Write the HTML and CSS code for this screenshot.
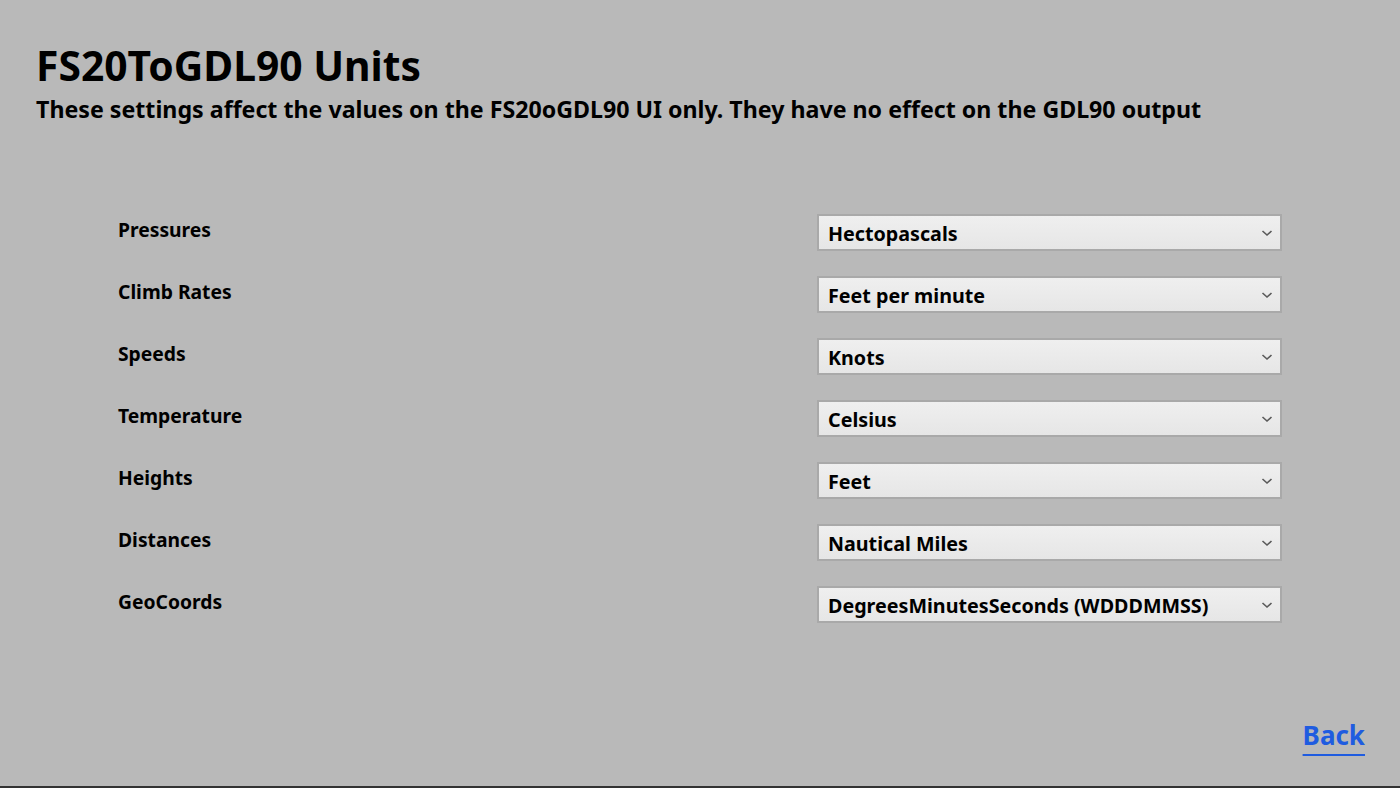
FILE: index.html
```html
<!DOCTYPE html>
<html>
<head>
<meta charset="utf-8">
<link rel="stylesheet" href="styles.css">
</head>
<body>
<div class="page">
  <header class="head">
    <h1 class="title">FS20ToGDL90 Units</h1>
    <p class="subtitle">These settings affect the values on the FS20oGDL90 UI only. They have no effect on the GDL90 output</p>
  </header>
  <main class="rows">
    <div class="row"><span class="label">Pressures</span><div class="select"><span>Hectopascals</span><svg class="chev" viewBox="0 0 12 8" width="12" height="8"><path d="M1.5 2 L6 6 L10.5 2" fill="none" stroke="#5a5a5a" stroke-width="1.6"/></svg></div></div>
    <div class="row"><span class="label">Climb Rates</span><div class="select"><span>Feet per minute</span><svg class="chev" viewBox="0 0 12 8" width="12" height="8"><path d="M1.5 2 L6 6 L10.5 2" fill="none" stroke="#5a5a5a" stroke-width="1.6"/></svg></div></div>
    <div class="row"><span class="label">Speeds</span><div class="select"><span>Knots</span><svg class="chev" viewBox="0 0 12 8" width="12" height="8"><path d="M1.5 2 L6 6 L10.5 2" fill="none" stroke="#5a5a5a" stroke-width="1.6"/></svg></div></div>
    <div class="row"><span class="label">Temperature</span><div class="select"><span>Celsius</span><svg class="chev" viewBox="0 0 12 8" width="12" height="8"><path d="M1.5 2 L6 6 L10.5 2" fill="none" stroke="#5a5a5a" stroke-width="1.6"/></svg></div></div>
    <div class="row"><span class="label">Heights</span><div class="select"><span>Feet</span><svg class="chev" viewBox="0 0 12 8" width="12" height="8"><path d="M1.5 2 L6 6 L10.5 2" fill="none" stroke="#5a5a5a" stroke-width="1.6"/></svg></div></div>
    <div class="row"><span class="label">Distances</span><div class="select"><span>Nautical Miles</span><svg class="chev" viewBox="0 0 12 8" width="12" height="8"><path d="M1.5 2 L6 6 L10.5 2" fill="none" stroke="#5a5a5a" stroke-width="1.6"/></svg></div></div>
    <div class="row"><span class="label">GeoCoords</span><div class="select"><span>DegreesMinutesSeconds (WDDDMMSS)</span><svg class="chev" viewBox="0 0 12 8" width="12" height="8"><path d="M1.5 2 L6 6 L10.5 2" fill="none" stroke="#5a5a5a" stroke-width="1.6"/></svg></div></div>
  </main>
  <footer class="foot"><a class="back" href="#">Back</a></footer>
</div>
<div class="taskbar"></div>
</body>
</html>
```
FILE: styles.css
```css
html, body {
  margin: 0;
  padding: 0;
  height: 100%;
}
body {
  background: #b9b9b9;
  font-family: "Noto Sans", "Open Sans", sans-serif;
  font-weight: 700;
  color: #000;
  display: flex;
  flex-direction: column;
  overflow: hidden;
}
.page {
  flex: 1;
  display: flex;
  flex-direction: column;
  padding: 0 35px 0 36px;
}
.head {
  padding-top: 39px;
}
.title {
  margin: 0;
  font-size: 40.8px;
  line-height: 52px;
  font-weight: 700;
}
.subtitle {
  margin: 3px 0 0;
  font-size: 23.2px;
  line-height: 30px;
}
.rows {
  margin-top: 90px;
  padding-left: 82px;
  display: flex;
  flex-direction: column;
  gap: 25px;
}
.row {
  display: flex;
  align-items: flex-start;
  justify-content: space-between;
  height: 37px;
  padding-right: 83px;
}
.label {
  font-size: 19.3px;
  line-height: 28px;
  margin-top: 2px;
}
.select {
  width: 465px;
  height: 37px;
  box-sizing: border-box;
  border: 2px solid #a9a9a9;
  background: linear-gradient(#efefef, #e6e6e6);
  display: flex;
  align-items: center;
  justify-content: space-between;
  padding: 2px 7px 0 9px;
  font-size: 19.7px;
}
.select span {
  line-height: 31px;
}
.chev {
  display: block;
  margin-top: -2px;
}
.foot {
  margin-top: auto;
  display: flex;
  justify-content: flex-end;
  padding-bottom: 33px;
}
.back {
  color: #1f5ce0;
  font-size: 26px;
  line-height: 36px;
  text-decoration: underline;
  text-decoration-thickness: 2px;
  text-underline-offset: 9px;
}
.taskbar {
  height: 2px;
  background: #333;
}
```
